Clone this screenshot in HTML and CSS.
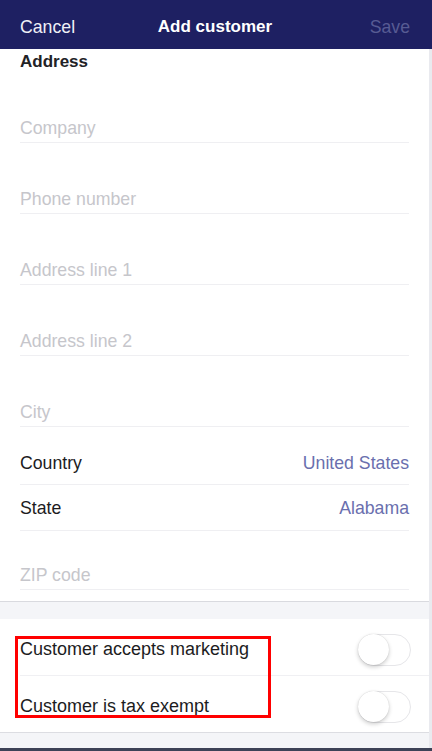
FILE: index.html
```html
<!DOCTYPE html>
<html>
<head>
<meta charset="utf-8">
<link rel="stylesheet" href="styles.css">
</head>
<body>
<div class="page">
  <header class="nav">
    <span class="nav-btn">Cancel</span>
    <span class="nav-title">Add customer</span>
    <span class="nav-btn nav-save">Save</span>
  </header>
  <main class="content">
    <section class="group group-address">
      <h2 class="heading">Address</h2>
      <div class="field"><span class="placeholder">Company</span></div>
      <div class="field"><span class="placeholder">Phone number</span></div>
      <div class="field"><span class="placeholder">Address line 1</span></div>
      <div class="field"><span class="placeholder">Address line 2</span></div>
      <div class="field"><span class="placeholder">City</span></div>
      <div class="row row-first"><span class="label">Country</span><span class="value">United States</span></div>
      <div class="row"><span class="label">State</span><span class="value">Alabama</span></div>
      <div class="field field-short"><span class="placeholder">ZIP code</span></div>
    </section>
    <div class="gap"></div>
    <section class="group group-toggles">
      <div class="toggle-row"><span class="label">Customer accepts marketing</span><span class="switch"><span class="knob"></span></span></div>
      <div class="toggle-row toggle-last"><span class="label">Customer is tax exempt</span><span class="switch"><span class="knob"></span></span></div>
      <div class="highlight"></div>
    </section>
    <div class="gap gap-bottom"></div>
  </main>
  <div class="bottom-bar"></div>
</div>
</body>
</html>
```
FILE: styles.css
```css
* { box-sizing: border-box; }
html, body { margin: 0; padding: 0; }
body {
  width: 432px;
  height: 751px;
  overflow: hidden;
  font-family: "Liberation Sans", Arial, sans-serif;
  background: #f4f5f8;
  color: #1c1c1e;
}
.page { display: flex; flex-direction: column; height: 751px; }
.nav {
  height: 49px;
  flex: none;
  background: #1e2062;
  display: grid;
  grid-template-columns: 1fr auto 1fr;
  align-items: center;
  padding: 5px 22px 0 20px;
}
.nav-btn { color: #f0f0f6; font-size: 17.7px; }
.nav-save { color: #575b93; justify-self: end; }
.nav-title { color: #ffffff; font-size: 17px; font-weight: bold; }
.content {
  flex: 1;
  display: flex;
  flex-direction: column;
  border-right: 3px solid #e9eaef;
}
.group { background: #ffffff; }
.group-address { padding: 3px 0 11px; border-bottom: 1px solid #d9dadf; }
.heading {
  margin: 0 20px;
  height: 20px;
  line-height: 20px;
  font-size: 17px;
  font-weight: bold;
  color: #222226;
}
.field {
  height: 71px;
  margin: 0 20px;
  display: flex;
  align-items: flex-end;
  padding-bottom: 4px;
  border-bottom: 1px solid #efeff2;
  font-size: 17.7px;
  line-height: 20px;
}
.field-short { height: 59px; }
.placeholder { color: #c6c6cb; }
.row {
  height: 46px;
  margin: 0 20px;
  display: flex;
  align-items: center;
  justify-content: space-between;
  border-bottom: 1px solid #efeff2;
  font-size: 17.7px;
  padding-top: 2px;
}
.row-first { height: 58px; padding-top: 16px; }
.label { color: #1c1c1e; }
.value { color: #6a6fae; }
.gap { height: 17px; flex: none; }
.gap-bottom { flex: 1; }
.group-toggles {
  position: relative;
  border-bottom: 1px solid #dcdde2;
}
.toggle-row {
  height: 57px;
  margin-left: 20px;
  padding: 5px 18px 0 0;
  display: flex;
  align-items: center;
  justify-content: space-between;
  border-bottom: 1px solid #f0f0f3;
  font-size: 18px;
}
.toggle-last { border-bottom: none; height: 56px; }
.switch {
  width: 53px;
  height: 32px;
  border-radius: 16px;
  border: 1.5px solid #e6e6e9;
  background: #ffffff;
  position: relative;
}
.knob {
  position: absolute;
  left: -1px;
  top: -1px;
  width: 31px;
  height: 31px;
  border-radius: 50%;
  background: #ffffff;
  box-shadow: 0 2px 4px rgba(0,0,0,0.2), 0 0 1px rgba(0,0,0,0.2);
}
.highlight {
  position: absolute;
  left: 15px;
  top: 17px;
  width: 256px;
  height: 82px;
  border: 3px solid #ff0000;
  pointer-events: none;
}
.bottom-bar { height: 3px; flex: none; background: #3d4257; }
```
